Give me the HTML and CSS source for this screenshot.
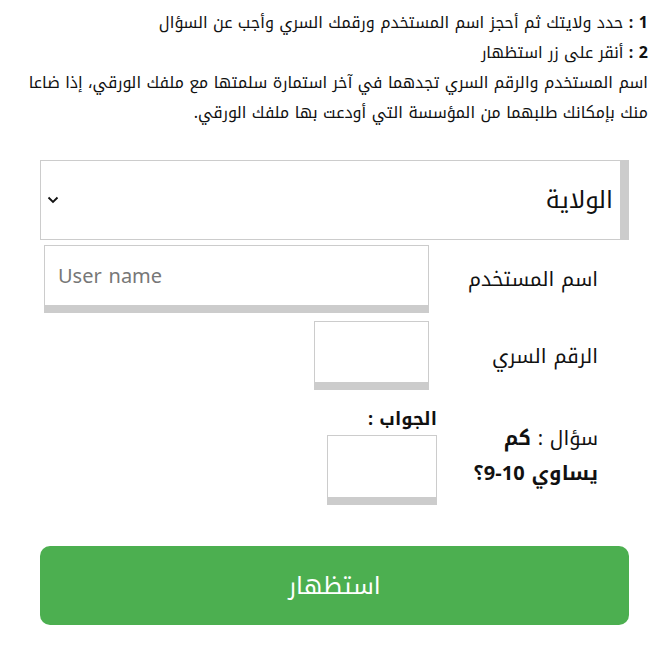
FILE: index.html
```html
<!DOCTYPE html>
<html lang="ar" dir="rtl">
<head>
<meta charset="utf-8">
<link rel="stylesheet" href="styles.css">
</head>
<body>
<div class="intro">
  <p><b>1 :</b> حدد ولايتك ثم أحجز اسم المستخدم ورقمك السري وأجب عن السؤال</p>
  <p><b>2 :</b> أنقر على زر استظهار</p>
  <p>اسم المستخدم والرقم السري تجدهما في آخر استمارة سلمتها مع ملفك الورقي، إذا ضاعا منك بإمكانك طلبهما من المؤسسة التي أودعت بها ملفك الورقي.</p>
</div>
<form class="form">
  <div class="select-wrap">
    <select class="select">
      <option>الولاية</option>
    </select>
    <svg class="chevron" width="12" height="8" viewBox="0 0 12 8"><path d="M1.5 1.5 L6 6 L10.5 1.5" fill="none" stroke="#111" stroke-width="1.8"/></svg>
  </div>
  <div class="row row-user">
    <label class="label">اسم المستخدم</label>
    <input class="field field-user" type="text" placeholder="User name" dir="ltr">
  </div>
  <div class="row row-pass">
    <label class="label">الرقم السري</label>
    <input class="field field-pass" type="password">
  </div>
  <div class="row row-q">
    <div class="question">
      <div>سؤال : <b>كم</b></div>
      <div><b>يساوي 10-9؟</b></div>
    </div>
    <div class="answer">
      <div class="answer-label">الجواب :</div>
      <input class="field field-ans" type="text">
    </div>
  </div>
  <button class="submit" type="button">استظهار</button>
</form>
</body>
</html>
```
FILE: styles.css
```css
body {
  margin: 8px;
  font-family: "Noto Kufi Arabic", "Noto Sans Arabic", "DejaVu Sans", sans-serif;
  color: #111;
  background: #fff;
}
.intro {
  padding: 0 13px 0 0;
  font-size: 16px;
  line-height: 30px;
}
.intro p { margin: 0; }
.form {
  margin: 32px 32px 0 32px;
}
.select-wrap {
  position: relative;
}
.select {
  appearance: none;
  -webkit-appearance: none;
  width: 100%;
  height: 80px;
  box-sizing: border-box;
  border: 1px solid #ccc;
  border-right: 9px solid #ccc;
  background: #fff;
  font-family: inherit;
  font-size: 24px;
  color: #111;
  padding: 0 7px 0 0;
  margin: 0;
  border-radius: 0;
}
.chevron {
  position: absolute;
  left: 7px;
  top: 36px;
}
.row {
  display: flex;
  align-items: center;
}
.label {
  width: 169px;
  box-sizing: border-box;
  padding-right: 31px;
  font-size: 20px;
}
.field {
  box-sizing: border-box;
  border: 1px solid #ccc;
  border-bottom: 8px solid #ccc;
  background: #fff;
  margin: 0;
  font-family: inherit;
  border-radius: 0;
  outline: none;
}
.row-user { margin-top: 5px; }
.field-user {
  width: 385px;
  height: 68px;
  margin-right: 31px;
  font-size: 20px;
  padding: 0 13px;
  text-align: left;
}
.field-user::placeholder { color: #777; }
.row-pass { margin-top: 8px; }
.field-pass {
  width: 115px;
  height: 69px;
  margin-right: 31px;
}
.row-q {
  margin-top: 17px;
  align-items: flex-start;
}
.question {
  width: 162px;
  box-sizing: border-box;
  padding: 14px 31px 0 0;
  font-size: 20px;
  line-height: 35px;
}
.answer {
  margin-right: 30px;
  width: 110px;
}
.answer-label {
  font-weight: bold;
  font-size: 18px;
  line-height: 24px;
  margin-bottom: 4px;
}
.field-ans {
  width: 110px;
  height: 70px;
}
.submit {
  display: block;
  width: 100%;
  height: 79px;
  margin-top: 41px;
  border: 0;
  border-radius: 10px;
  background: #4caf50;
  color: #fff;
  font-family: inherit;
  font-size: 24px;
}
```
